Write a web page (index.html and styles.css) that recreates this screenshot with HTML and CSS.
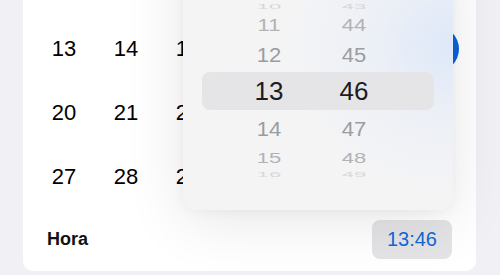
FILE: index.html
```html
<!DOCTYPE html>
<html lang="es">
<head>
<meta charset="utf-8">
<title>Fecha y hora</title>
<link rel="stylesheet" href="styles.css">
</head>
<body>
<div class="screen">
  <div class="card">
    <div class="days">
      <div class="day">13</div><div class="day">14</div><div class="day">15</div><div class="day">16</div><div class="day">17</div><div class="day">18</div><div class="day"><span class="sel">19</span></div>
      <div class="day">20</div><div class="day">21</div><div class="day">22</div><div class="day">23</div><div class="day">24</div><div class="day">25</div><div class="day">26</div>
      <div class="day">27</div><div class="day">28</div><div class="day">29</div><div class="day">30</div><div class="day">31</div><div class="day"></div><div class="day"></div>
    </div>
    <div class="footer">
      <span class="label">Hora</span>
      <span class="time">13:46</span>
    </div>
  </div>
  <div class="popover">
    <div class="wheel">
      <div class="row r3"><span>10</span><span>43</span></div>
      <div class="row r2"><span>11</span><span>44</span></div>
      <div class="row r1a"><span>12</span><span>45</span></div>
      <div class="row current"><span>13</span><span>46</span></div>
      <div class="row r1b"><span>14</span><span>47</span></div>
      <div class="row r2b"><span>15</span><span>48</span></div>
      <div class="row r3b"><span>16</span><span>49</span></div>
    </div>
  </div>
</div>
</body>
</html>
```
FILE: styles.css
```css
* { box-sizing: border-box; }
html, body { margin: 0; padding: 0; }
body {
  background: #f0f0f5;
  font-family: "Liberation Sans", Arial, sans-serif;
  width: 500px;
  height: 275px;
  overflow: hidden;
}
.screen {
  position: relative;
  width: 500px;
  height: 275px;
}
.card {
  margin-left: 23px;
  width: 453px;
  height: 271px;
  background: #ffffff;
  border-radius: 0 0 10px 10px;
  display: flex;
  flex-direction: column;
}
.days {
  display: grid;
  grid-template-columns: repeat(7, 62px);
  grid-auto-rows: 64px;
  padding: 17px 9px 0 10px;
}
.day {
  display: flex;
  align-items: center;
  justify-content: center;
  font-size: 22px;
  color: #000;
}
.sel {
  width: 46px;
  height: 46px;
  border-radius: 50%;
  background: #0a64d9;
  color: #fff;
  display: flex;
  align-items: center;
  justify-content: center;
  font-weight: 600;
}
.footer {
  display: flex;
  align-items: center;
  justify-content: space-between;
  padding: 11px 24px 0 24px;
}
.label {
  font-size: 18px;
  font-weight: 700;
  color: #111;
}
.time {
  background: #e4e4e6;
  border-radius: 8px;
  height: 39px;
  padding: 0 15px;
  display: flex;
  align-items: center;
  font-size: 20px;
  color: #1268d6;
}
.popover {
  position: absolute;
  left: 183px;
  top: -60px;
  width: 270px;
  height: 270px;
  border-radius: 12px;
  background:
    radial-gradient(ellipse 170px 150px at 270px 105px, rgba(214, 228, 250, 0.75) 0, rgba(226, 234, 248, 0.45) 45%, rgba(244, 244, 245, 0) 100%),
    #f4f4f5;
  box-shadow: 0 10px 60px rgba(0, 0, 0, 0.10), 0 2px 12px rgba(0, 0, 0, 0.04);
  padding: 60px 19px 0 19px;
}
.wheel {
  display: flex;
  flex-direction: column;
}
.row {
  display: grid;
  grid-template-columns: 60px 60px;
  column-gap: 25px;
  padding-left: 37px;
  align-items: center;
  justify-items: center;
  font-size: 22px;
  color: #9c9c9e;
  overflow: hidden;
}
.row span { display: block; }
.r3 { height: 14px; line-height: 14px; color: #d6d6d8; }
.r3 span { transform: scaleY(0.35); }
.r2 { height: 24px; line-height: 24px; color: #b2b2b4; }
.r2 span { transform: scaleY(0.74); }
.r1a { height: 34px; line-height: 34px; }
.r1a span { transform: scaleY(0.94); }
.current {
  height: 38px;
  line-height: 38px;
  background: #e5e5e7;
  border-radius: 8px;
  font-size: 26px;
  color: #1c1c1e;
}
.r1b { height: 37px; line-height: 37px; }
.r1b span { transform: scaleY(0.94); }
.r2b { height: 21px; line-height: 21px; color: #b2b2b4; }
.r2b span { transform: scaleY(0.7); }
.r3b { height: 14px; line-height: 14px; color: #d8d8da; }
.r3b span { transform: scaleY(0.35); }
```
